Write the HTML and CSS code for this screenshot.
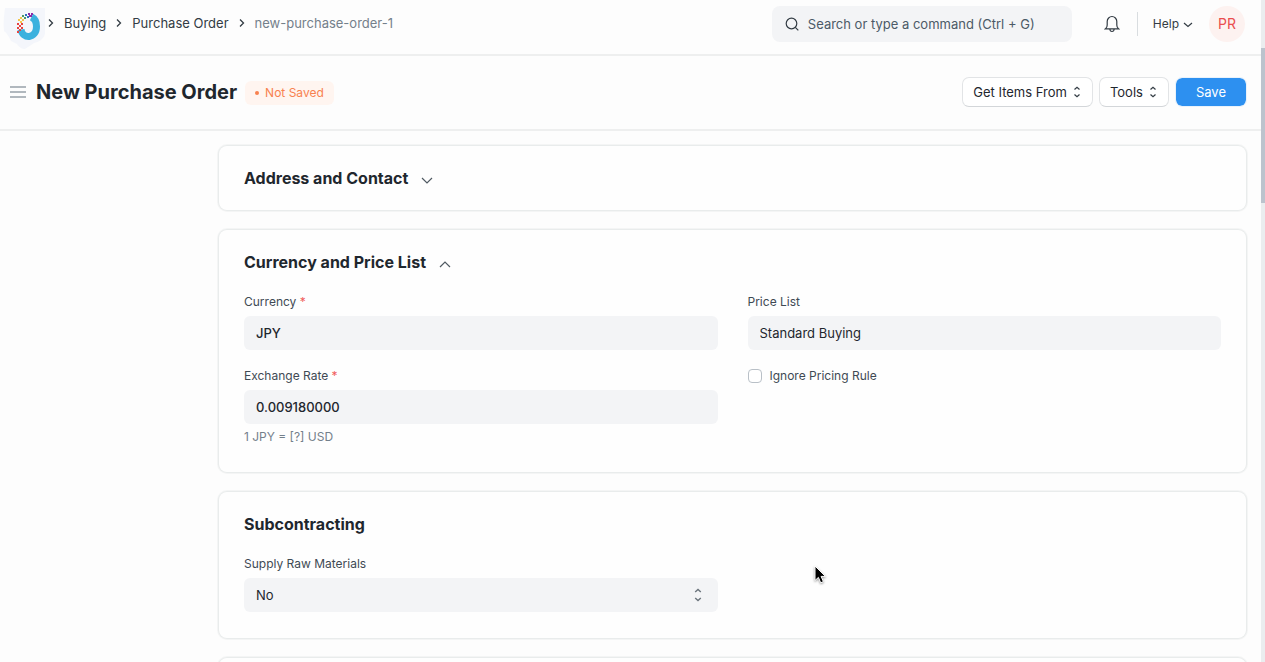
FILE: index.html
```html
<!DOCTYPE html>
<html lang="en">
<head>
<meta charset="utf-8">
<meta name="viewport" content="width=device-width, initial-scale=1">
<title>New Purchase Order</title>
<link rel="stylesheet" href="styles.css">
</head>
<body>
<div class="app">
  <header class="navbar">
    <a class="brand" href="#" aria-label="Home">
      <svg class="logo" viewBox="0 0 44 42" width="44" height="42" aria-hidden="true">
        <path d="M2 0H42V26Q40 33 31 35L22 41Q17 41 14 36L8 33Q5 26 1 23Q0 14 2 0Z" fill="#f4f6fb"/>
        <path fill="none" stroke="#3cb1de" stroke-width="7" d="M28.500 9Q33.500 11.500 33.500 18.500C33.500 31 19.500 31.500 18 21.500"/>
        <g fill="#e8433f"><path d="M14 15h2v2h-2zM16 17h2v2h-2zM18 15h2v2h-2zM14 19h2v2h-2zM18 19h2v2h-2zM16 21h2v2h-2zM14 23h2v2h-2z"/></g>
        <g fill="#f3c64a"><path d="M15 11h2v2h-2zM17 13h2v2h-2zM17 9h2v2h-2zM19 11h2v2h-2z"/></g>
        <g fill="#4a9a67"><path d="M19 7h2v2h-2zM21 9h2v2h-2z"/></g>
        <g fill="#2c6fbd"><path d="M22 6h2v2h-2zM24 8h2v2h-2z"/></g>
        <g fill="#8c2ba6"><path d="M25 5h2v2h-2zM28 5h2v2h-2zM26 7h3v2h-3z"/></g>
      </svg>
    </a>
    <nav class="breadcrumbs" aria-label="Breadcrumb">
      <svg class="sep" viewBox="0 0 6 10" width="6" height="10"><path d="M1 1.500 4.500 5 1 8.500"/></svg>
      <a href="#">Buying</a>
      <svg class="sep" viewBox="0 0 6 10" width="6" height="10"><path d="M1 1.500 4.500 5 1 8.500"/></svg>
      <a href="#">Purchase Order</a>
      <svg class="sep" viewBox="0 0 6 10" width="6" height="10"><path d="M1 1.500 4.500 5 1 8.500"/></svg>
      <a class="current" href="#" aria-current="page">new-purchase-order-1</a>
    </nav>
    <div class="tools">
      <div class="search">
        <svg class="line" viewBox="0 0 14 14" width="14" height="14" aria-hidden="true"><circle cx="6.500" cy="6.500" r="5.300"/><path d="m10.300 10.300 3 3"/></svg>
        <input type="search" aria-label="Search" placeholder="Search or type a command (Ctrl + G)">
      </div>
      <button class="plain bell" type="button" aria-label="Notifications">
        <svg class="line" viewBox="0 0 16 18" width="16" height="18"><path d="M1.500 13.800Q3.200 12.500 3.200 10V6.500A4.800 5 0 0 1 12.800 6.500V10Q12.800 12.500 14.500 13.800ZM5.800 14Q6 16.500 8 16.500T10.200 14"/></svg>
      </button>
      <button class="plain help" type="button">Help
        <svg class="line" viewBox="0 0 10 10" width="10" height="10"><path d="m1 4 4 3.500 4-3.500"/></svg>
      </button>
      <button class="plain avatar" type="button">PR</button>
    </div>
  </header>

  <div class="page-head">
    <button class="plain menu" type="button" aria-label="Toggle sidebar">
      <svg viewBox="0 0 16 12" width="16" height="12"><path d="M0 1h16M0 6h16M0 11h16"/></svg>
    </button>
    <h1>New Purchase Order</h1>
    <span class="status">Not Saved</span>
    <div class="actions">
      <button class="btn" type="button">Get Items From
        <svg class="line" viewBox="0 0 8 12" width="8" height="12"><path d="M1.500 3.500 4 1.200l2.500 2.300M1.500 8.500 4 10.800l2.500-2.300"/></svg>
      </button>
      <button class="btn" type="button">Tools
        <svg class="line" viewBox="0 0 8 12" width="8" height="12"><path d="M1.500 3.500 4 1.200l2.500 2.300M1.500 8.500 4 10.800l2.500-2.300"/></svg>
      </button>
      <button class="btn primary" type="button">Save</button>
    </div>
  </div>

  <main class="form">
    <section class="card">
      <h2>Address and Contact
        <svg viewBox="0 0 12 12" width="12" height="12"><path d="m1 4 5 5 5-5"/></svg>
      </h2>
    </section>

    <section class="card">
      <h2>Currency and Price List
        <svg viewBox="0 0 12 12" width="12" height="12"><path d="m1 9 5-5 5 5"/></svg>
      </h2>
      <div class="columns">
        <div class="column">
          <div class="field">
            <label for="currency">Currency <span class="required">*</span></label>
            <input class="control strong" id="currency" type="text" value="JPY">
          </div>
          <div class="field">
            <label for="rate">Exchange Rate <span class="required">*</span></label>
            <input class="control strong" id="rate" type="text" value="0.009180000">
            <p class="hint">1 JPY = [?] USD</p>
          </div>
        </div>
        <div class="column">
          <div class="field">
            <label for="price-list">Price List</label>
            <input class="control" id="price-list" type="text" value="Standard Buying">
          </div>
          <div class="check">
            <input type="checkbox" id="ignore">
            <label for="ignore">Ignore Pricing Rule</label>
          </div>
        </div>
      </div>
    </section>

    <section class="card">
      <h2>Subcontracting</h2>
      <div class="columns">
        <div class="column">
          <div class="field">
            <label for="supply">Supply Raw Materials</label>
            <div class="select">
              <select class="control" id="supply"><option>No</option><option>Yes</option></select>
              <svg viewBox="0 0 8 14" width="8" height="14"><path d="M1.200 4 4 1.500 6.800 4M1.200 10 4 12.500 6.800 10"/></svg>
            </div>
          </div>
        </div>
      </div>
    </section>

    <section class="card"></section>
  </main>
</div>
<div class="scrollbar" aria-hidden="true"><div class="thumb"></div></div>
<svg class="pointer" viewBox="0 0 14 20" width="14" height="20" aria-hidden="true"><path d="M1 1V15.500L4.400 12.400 6.700 17.800 9.400 16.600 7.100 11.400H11.500Z"/></svg>
</body>
</html>
```
FILE: styles.css
```css
* {
  box-sizing: border-box;
}

body {
  margin: 0;
  height: 100vh;
  display: flex;
  overflow: hidden;
  position: relative;
  background: #fdfdfd;
  color: #1f272e;
  font: 13px/20px Inter, "Liberation Sans", sans-serif;
}

button,
input,
select {
  font: inherit;
  color: inherit;
}

svg {
  flex: none;
  fill: none;
}

a {
  color: inherit;
  text-decoration: none;
}

.app {
  flex: 1;
  min-width: 0;
}

.line {
  stroke: #333c44;
  stroke-width: 1.2;
}

.plain {
  display: flex;
  align-items: center;
  padding: 0;
  border: 0;
  background: none;
}

/* Top bar */
.navbar {
  display: flex;
  align-items: center;
  height: 56px;
  padding: 0 16px 8px 3px;
  border-bottom: 2px solid #eeefef;
}

.brand {
  display: flex;
  padding-top: 12px;
}

.breadcrumbs {
  display: flex;
  align-items: center;
  gap: 10px;
  padding-left: 1px;
  color: #333c44;
}

.breadcrumbs .current {
  color: #74808b;
}

.sep {
  stroke: #333c44;
  stroke-width: 1.3;
}

.tools {
  display: flex;
  align-items: center;
  margin-left: auto;
  padding-top: 2px;
}

.search {
  display: flex;
  align-items: center;
  gap: 9px;
  width: 300px;
  height: 36px;
  padding: 0 13px;
  border-radius: 8px;
  background: #f3f4f6;
}

.search input {
  flex: 1;
  min-width: 0;
  padding: 0;
  border: 0;
  outline: 0;
  background: none;
  appearance: none;
}

.search input::placeholder {
  color: #4c5a67;
  opacity: 1;
}

.bell {
  height: 24px;
  margin-left: 32px;
  padding-right: 17px;
  border-right: 1px solid #d9dde0;
}

.help {
  gap: 4px;
  margin: 0 16px 0 15px;
  font-size: 12px;
  color: #333c44;
}

.avatar {
  justify-content: center;
  width: 36px;
  height: 36px;
  border-radius: 50%;
  background: #fdf2f0;
  color: #ea4e4e;
  font-size: 14px;
}

/* Page title and actions */
.page-head {
  display: flex;
  align-items: center;
  height: 75px;
  padding: 0 14px 2px 10px;
  border-bottom: 2px solid #eeefef;
}

.menu svg {
  stroke: #98a1a9;
  stroke-width: 1.5;
}

h1 {
  margin: 0 8px 0 10px;
  font-size: 20px;
  line-height: 24px;
  font-weight: 700;
}

.status {
  display: flex;
  align-items: center;
  gap: 6px;
  height: 24px;
  margin-top: 2px;
  padding: 0 10px;
  border-radius: 6px;
  background: #fff5f0;
  color: #f8814f;
  font-size: 12px;
}

.status::before {
  content: "";
  width: 4px;
  height: 4px;
  border-radius: 50%;
  background: currentColor;
}

.actions {
  display: flex;
  gap: 6px;
  margin-left: auto;
}

.btn {
  display: flex;
  align-items: center;
  gap: 6px;
  height: 30px;
  padding: 0 11px 0 10px;
  border: 1px solid #e2e4e6;
  border-bottom-color: #d3d6d9;
  border-radius: 7px;
  background: #fff;
}

.btn.primary {
  padding: 0 20px;
  border-color: #e9f2fb;
  background: #2d90f0;
  background-clip: padding-box;
  color: #fff;
}

/* Form */
.form {
  display: flex;
  flex-direction: column;
  gap: 20px;
  padding: 15px 15px 0 219px;
}

.card {
  min-height: 64px;
  padding: 20px 25px;
  border-radius: 8px;
  background: #fefefe;
  box-shadow: 0 0 0 1px #e9ecec, 0 0 0 2px #f4f5f5;
}

.card:has(.columns) {
  padding-bottom: 26px;
}

h2 {
  display: flex;
  align-items: center;
  gap: 13px;
  margin: 0;
  font-size: 16px;
  line-height: 24px;
  font-weight: 700;
}

h2 svg {
  margin-top: 3px;
  stroke: #505a62;
  stroke-width: 1.2;
}

.columns {
  display: grid;
  grid-template-columns: 1fr 1fr;
  gap: 30px;
  padding-top: 19px;
}

.column {
  display: flex;
  flex-direction: column;
  gap: 17px;
}

.field {
  display: flex;
  flex-direction: column;
}

label {
  color: #3f4a54;
  font-size: 12px;
  line-height: 18px;
}

.required {
  color: #f05c5c;
}

.control {
  width: 100%;
  height: 34px;
  padding: 0 12px;
  border: 0;
  border-radius: 6px;
  outline: 0;
  background: #f3f4f6;
  appearance: none;
}

.field > .control,
.select {
  margin-top: 5px;
}

.strong {
  font-weight: 500;
}

.hint {
  margin: 4px 0 0;
  color: #74808b;
  font-size: 12px;
  line-height: 18px;
}

.check {
  display: flex;
  align-items: center;
  gap: 8px;
}

.check input {
  width: 14px;
  height: 14px;
  margin: 0;
  border: 1px solid #b9c0c7;
  border-radius: 4px;
  background: #fff;
  appearance: none;
}

.select {
  display: grid;
  align-items: center;
}

.select > * {
  grid-area: 1 / 1;
}

.select svg {
  justify-self: end;
  margin-right: 16px;
  pointer-events: none;
  stroke: #6b747c;
  stroke-width: 1.4;
}

/* Scroll indicator and mouse pointer */
.scrollbar {
  width: 4px;
  padding-top: 48px;
  background: #ebedef;
}

.thumb {
  height: 155px;
  background: #bcc3cd;
}

.pointer {
  position: absolute;
  left: 814px;
  top: 565px;
  fill: #000;
  stroke: #fff;
  filter: drop-shadow(0 1px 1px #0006);
}
```
